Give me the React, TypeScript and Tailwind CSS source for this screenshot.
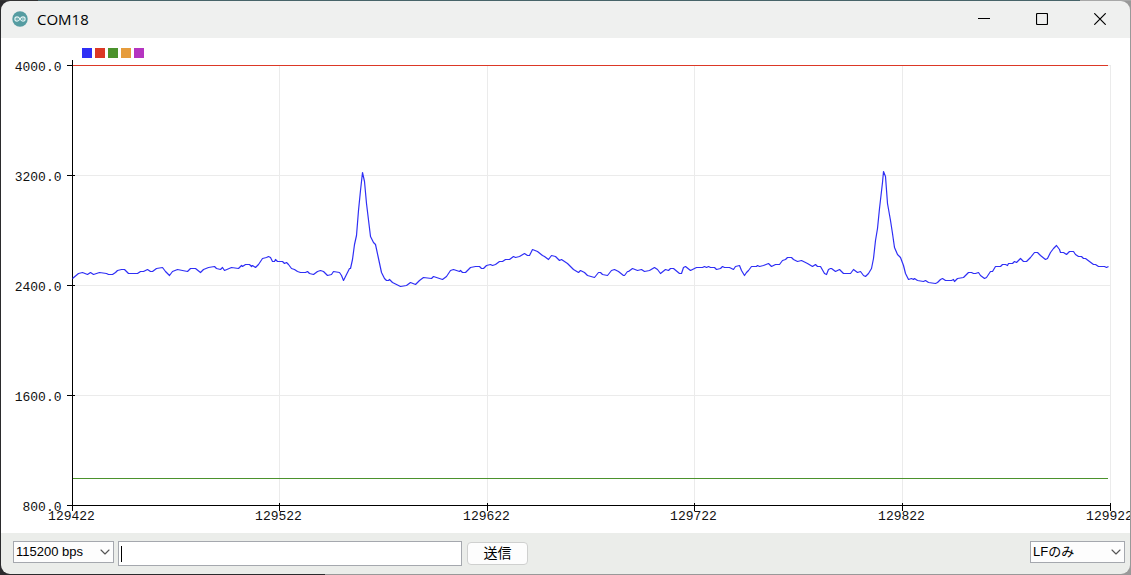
import type { SelectHTMLAttributes } from 'react'
import { memo } from 'react'
import { ChevronDown } from 'lucide-react'

// 凡例の色
const LEGEND = [
  { x: 82, color: '#2f2ff5' },
  { x: 95, color: '#dc3826' },
  { x: 108, color: '#4b922c' },
  { x: 121, color: '#e69c3c' },
  { x: 134, color: '#b534c0' },
]

const Y_TICKS = [
  { y: 65, label: '4000.0' },
  { y: 175, label: '3200.0' },
  { y: 285, label: '2400.0' },
  { y: 395, label: '1600.0' },
  { y: 505, label: '800.0' },
]

const X_TICKS = [
  { x: 72, label: '129422' },
  { x: 279, label: '129522' },
  { x: 487, label: '129622' },
  { x: 694, label: '129722' },
  { x: 902, label: '129822' },
  { x: 1110, label: '129922' },
]

const SIGNAL = [
  '72,278 78,273 82,272 87,274 90,272 93,274 99,272 106,273 108,274 112,274 115,272 117,270 121,269 124,269',
  '128,273 137,273 140,271 143,271 147,269 150,271 152,271 156,268 162,267 165,271 169,275 172,271 177,269',
  '187,271 190,268 195,268 200,272 203,269 208,267 214,266 216,268 220,269 222,267 224,270 231,267 238,268',
  '241,265 242,266 245,264 249,264 251,266 252,265 255,267 258,264 262,258 266,257 268,256 270,257 272,261',
  '274,261 275,259 277,261 282,261 284,263 286,262 288,264 291,268 294,269 297,271 300,272 305,272 307,271',
  '309,273 313,274 317,271 320,270 323,271 327,275 331,274 333,271 339,272 341,275 343,280 346,274 349,268',
  '350,268 352,259 354,244 356,235 358,210 360,190 362,172 364,181 366,203 370,236 373,242 375,244 378,258',
  '381,272 384,278 386,280 388,280 389,279 392,282 400,286 406,285 410,282 415,284 419,280 423,277 431,278',
  '433,276 436,277 439,278 442,279 446,276 450,270 453,269 459,271 460,270 462,272 465,272 470,267 475,266',
  '479,266 481,268 483,268 486,265 490,264 492,265 495,264 499,261 502,261 505,259 509,259 513,256 515,257',
  '519,256 524,253 527,255 529,255 532,249 537,251 542,255 544,256 548,259 551,255 555,256 559,260 561,259',
  '567,263 573,269 578,272 580,270 584,272 587,275 594,277 598,272 600,272 602,274 607,275 611,270 614,269',
  '618,271 623,275 624,275 627,271 628,271 632,268 637,270 641,269 644,271 649,270 654,267 657,269 660,273',
  '665,269 668,270 670,268 673,268 679,273 681,273 683,267 685,266 690,270 696,267 702,267 704,266 706,267',
  '708,266 710,267 714,267 716,269 720,268 722,266 724,267 729,267 733,269 735,266 739,265 741,270 744,275',
  '746,272 748,270 751,266 756,266 757,265 759,266 763,265 768,263 771,266 775,264 779,264 782,260 785,259',
  '787,257 791,257 793,259 797,261 801,260 807,263 812,266 815,264 817,266 820,266 824,273 826,274 828,269',
  '830,268 831,268 835,271 839,269 843,273 850,273 853,269 857,272 860,271 863,275 865,276 868,273 871,268',
  '873,258 875,240 877,228 879,208 882,182 883,171 885,176 887,203 890,220 892,233 894,247 897,254 900,257',
  '903,265 905,273 908,279 911,278 913,279 914,278 917,280 923,281 925,280 928,282 935,283 937,282 940,279',
  '942,278 945,280 951,280 953,279 954,281 957,278 963,277 968,272 971,272 973,273 975,273 978,272 980,275',
  '984,278 986,277 990,271 992,271 995,266 1000,266 1002,264 1005,264 1007,265 1008,263 1012,263 1014,261',
  '1016,262 1020,258 1023,261 1026,261 1030,257 1034,252 1037,252 1040,255 1045,259 1047,258 1050,252',
  '1053,248 1056,245 1059,249 1060,252 1063,252 1066,254 1069,251 1073,251 1075,254 1078,256 1081,256',
  '1083,258 1085,258 1093,264 1095,264 1098,266 1104,266 1106,267 1108,266',
].join(' ')

/**
 * タイトルバー
 */
const TitleBar = () => (
  <header className="flex h-[37px] items-center bg-[#eff0ef] pb-px pl-[11px]">
    <svg className="size-4" viewBox="0 0 16 16" aria-hidden="true">
      <circle cx="8" cy="8" r="7.7" fill="#559ca1" />
      <path
        d="M8 8C7 6.5 6.2 5.8 5.1 5.8a2.2 2.2 0 0 0 0 4.4C6.2 10.2 7 9.5 8 8s1.8-2.2 2.9-2.2a2.2 2.2 0 0 1 0 4.4C9.8 10.2 9 9.5 8 8Z"
        fill="none"
        stroke="#e4f3f3"
        strokeWidth="1.2"
      />
      <path d="M4.3 8h1.6M10.1 8h1.6M10.9 7.2v1.6" stroke="#e4f3f3" strokeWidth="0.6" />
    </svg>
    <h1 className="ml-[9px] flex-1 font-['Open_Sans','Noto_Sans',sans-serif] text-[15px] leading-5 text-black">
      COM18
    </h1>
    <div className="flex h-full pr-px">
      <button type="button" aria-label="最小化" className="flex h-full w-[58px] items-center justify-center">
        <svg className="size-3" viewBox="0 0 12 12">
          <path d="M0 5.5h12" stroke="#000" />
        </svg>
      </button>
      <button type="button" aria-label="最大化" className="flex h-full w-[58px] items-center justify-center">
        <svg className="size-3" viewBox="0 0 12 12">
          <rect x="0.5" y="0.5" width="11" height="11" rx="1" fill="none" stroke="#000" strokeWidth="1.2" />
        </svg>
      </button>
      <button type="button" aria-label="閉じる" className="flex h-full w-[58px] items-center justify-center">
        <svg className="size-3" viewBox="0 0 12 12">
          <path d="M0.3 0.3l11.4 11.4M11.7 0.3L0.3 11.7" stroke="#000" strokeWidth="1.2" />
        </svg>
      </button>
    </div>
  </header>
)

/**
 * シリアルプロッタのグラフ
 */
const Plot = memo(() => (
  <svg
    className="block h-auto w-full bg-white font-['Liberation_Mono',monospace] text-[13px]"
    viewBox="0.5 37.5 1129 495"
    role="img"
    aria-label="シリアルプロッタ"
  >
    {LEGEND.map(({ x, color }) => (
      <rect key={x} x={x - 0.5} y="47.5" width="10" height="10" fill={color} />
    ))}

    {/* グリッド */}
    <g stroke="#ebebeb">
      {Y_TICKS.slice(0, 4).map(({ y }) => (
        <path key={y} d={`M72 ${y}H1110.5`} />
      ))}
      {X_TICKS.slice(1).map(({ x }) => (
        <path key={x} d={`M${x} 65V505`} />
      ))}
    </g>

    {/* 軸と目盛り */}
    <g stroke="#000">
      <path d="M72 59.5V510.5M66.5 505H1110.5" />
      {Y_TICKS.map(({ y }) => (
        <path key={y} d={`M66.5 ${y}H74.5`} />
      ))}
      {X_TICKS.map(({ x }) => (
        <path key={x} d={`M${x} 502.5V510.5`} />
      ))}
    </g>

    <g fill="#111">
      {Y_TICKS.map(({ y, label }) => (
        <text key={y} x="61" y={y + 5} textAnchor="end">
          {label}
        </text>
      ))}
      {X_TICKS.map(({ x, label }) => (
        <text key={x} x={x - 1} y="519" textAnchor="middle">
          {label}
        </text>
      ))}
    </g>

    {/* データ系列 */}
    <path d="M72.5 65H1107.5" stroke="#dc3826" />
    <path d="M72.5 478H1107.5" stroke="#4b922c" />
    <polyline points={SIGNAL} fill="none" stroke="#2f2ff5" strokeWidth="1.2" strokeLinejoin="round" />
  </svg>
))

Plot.displayName = 'Plot'

interface ComboProps extends SelectHTMLAttributes<HTMLSelectElement> {
  options: string[]
}

const Combo = ({ options, ...props }: ComboProps) => (
  <div className="relative">
    <select
      {...props}
      className="block h-[22px] w-full appearance-none border border-[#a5a8ae] bg-[#fdfdfd] pl-[2px] pr-4 text-[13px] leading-5 text-black outline-none"
    >
      {options.map((option) => (
        <option key={option}>{option}</option>
      ))}
    </select>
    <ChevronDown
      className="pointer-events-none absolute right-px top-[3px] size-4 text-[#555]"
      strokeWidth={1.7}
    />
  </div>
)

/**
 * 送信欄と通信設定
 */
const SendBar = () => (
  <form
    className="flex h-[41px] items-start bg-[#ebedea] pl-3 pr-[5px] pt-2 font-['Liberation_Sans','Noto_Sans_CJK_JP',sans-serif]"
    onSubmit={(e) => e.preventDefault()}
  >
    <div className="w-[101px] shrink-0">
      <Combo aria-label="通信速度" options={['115200 bps', '57600 bps', '9600 bps']} />
    </div>
    <div className="ml-1 flex h-[25px] w-[344px] items-center border border-[#a5a8ae] bg-white pl-[2px]">
      <span className="h-4 w-px bg-black" />
      <input
        type="text"
        aria-label="送信するテキスト"
        className="h-full min-w-0 flex-1 bg-transparent text-[13px] caret-transparent outline-none"
      />
    </div>
    <button
      type="submit"
      className="ml-[5px] mt-px h-[23px] w-[61px] rounded-[4px] border border-[#cfd0cf] bg-[#fdfdfd] pb-[2px] text-sm leading-4 text-black"
    >
      送信
    </button>
    <div className="ml-auto w-[95px] shrink-0">
      <Combo aria-label="改行コード" options={['LFのみ', '改行なし', 'CRのみ', 'CRおよびLF']} />
    </div>
  </form>
)

export default function App() {
  return (
    <div className="p-px [background:linear-gradient(90deg,#333_0_38px,#476469_38px_1080px,#a8a8a8_1080px)_0_0/100%_1px_no-repeat,linear-gradient(90deg,#2b2b2d_0_325px,#999_325px)]">
      <div className="overflow-hidden rounded-[9px]">
        <TitleBar />
        <Plot />
        <SendBar />
      </div>
    </div>
  )
}
